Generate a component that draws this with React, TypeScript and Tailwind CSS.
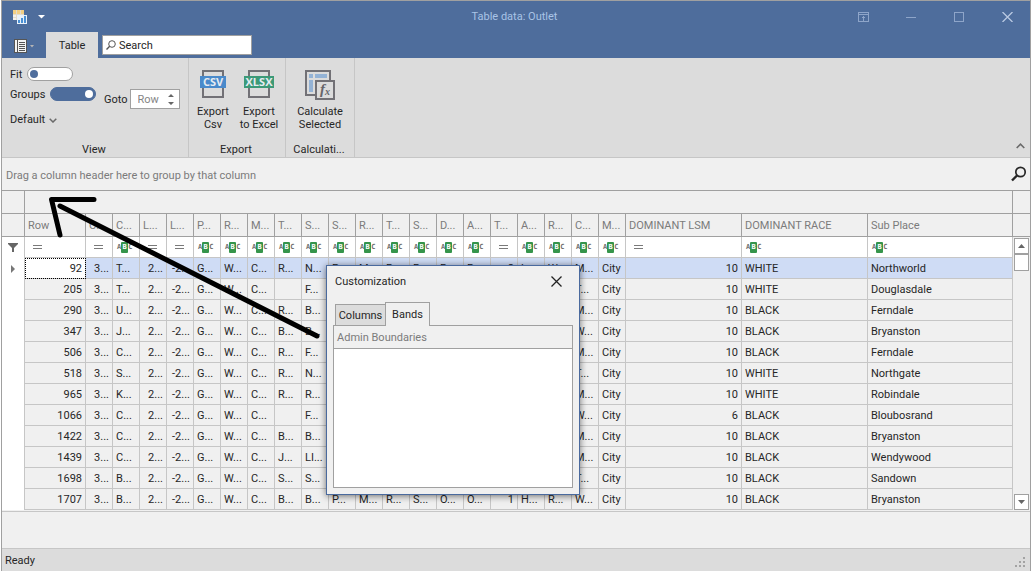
import React from 'react';

type FilterKind = 'eq' | 'abc';

interface Column {
  title: string;
  width?: string;
  filter: FilterKind;
  right?: boolean;
}

const narrow = (title: string, filter: FilterKind = 'abc', right = false): Column => ({
  title,
  width: 'w-[27px]',
  filter,
  right
});

const columns: Column[] = [
  { title: 'Row', width: 'w-[61px]', filter: 'eq', right: true },
  narrow('C...', 'eq', true),
  narrow('C...'),
  narrow('L...', 'eq', true),
  narrow('L...', 'eq', true),
  narrow('P...'),
  narrow('R...'),
  narrow('M...'),
  narrow('T...'),
  narrow('S...'),
  narrow('S...'),
  narrow('R...'),
  narrow('T...'),
  narrow('S...'),
  narrow('D...'),
  narrow('A...'),
  narrow('T...', 'eq', true),
  narrow('A...'),
  narrow('R...'),
  narrow('C...'),
  narrow('M...'),
  { title: 'DOMINANT LSM', width: 'w-[116px]', filter: 'eq', right: true },
  { title: 'DOMINANT RACE', width: 'w-[126px]', filter: 'abc' },
  { title: 'Sub Place', filter: 'abc' }
];

const rows = [
  '92|3...|T...|2...|-2...|G...|W...|C...|R...|N...|P...|M...|R...|R...|R...|R...|2|L...|W...|M...|City|10|WHITE|Northworld',
  '205|3...|T...|2...|-2...|G...|W...|C...||F...||||||||||T...|City|10|WHITE|Douglasdale',
  '290|3...|U...|2...|-2...|G...|W...|C...|R...|B...||||||||||M...|City|10|BLACK|Ferndale',
  '347|3...|J...|2...|-2...|G...|W...|C...|B...|B...||||||||||W...|City|10|BLACK|Bryanston',
  '506|3...|C...|2...|-2...|G...|W...|C...|R...|F...||||||||||M...|City|10|BLACK|Ferndale',
  '518|3...|S...|2...|-2...|G...|W...|C...|R...|N...||||||||||T...|City|10|WHITE|Northgate',
  '965|3...|K...|2...|-2...|G...|W...|C...|R...|R...||||||||||M...|City|10|WHITE|Robindale',
  '1066|3...|C...|2...|-2...|G...|W...|C...||F...||||||||||W...|City|6|BLACK|Bloubosrand',
  '1422|3...|C...|2...|-2...|G...|W...|C...|B...|B...||||||||||M...|City|10|BLACK|Bryanston',
  '1439|3...|C...|2...|-2...|G...|W...|C...|J...|LI...||||||||||M...|City|10|BLACK|Wendywood',
  '1698|3...|B...|2...|-2...|G...|W...|C...|S...|S...||||||||||T...|City|10|BLACK|Sandown',
  '1707|3...|B...|2...|-2...|G...|W...|C...|B...|B...|P...|M...|R...|S...|O...|O...|1|H...|R...|W...|City|10|BLACK|Bryanston'
].map((line) => line.split('|'));

const TitleBar = () => (
  <header className="flex h-[31px] items-center bg-[#4e6d9c] pl-[11px] text-[#a9c4e6]">
    <svg width="14" height="14" viewBox="0 0 14 14" shapeRendering="crispEdges">
      <rect width="11" height="10" fill="#f4f1ea" />
      <path d="M0 0h11v4H0z" fill="#f3cf83" />
      <path d="M0 4.500h11M0 7.500h5M3.500 0v10M7.500 0v4" stroke="#e3dccd" fill="none" />
      <rect x="4" y="5" width="10" height="9" fill="#e9f1fa" />
      <path d="M5 10h2v3H5zM8 8h2v5H8zM11 6h2v7h-2z" fill="#4a90d4" />
    </svg>
    <button type="button" aria-label="Customize toolbar" className="ml-[11px]">
      <svg width="7" height="4" viewBox="0 0 7 4"><path d="M0 0h7L3.500 3.500z" fill="#fff" /></svg>
    </button>
    <h1 className="flex-1 pl-[126px] text-center">Table data: Outlet</h1>
    <div className="flex items-center gap-[37px] pr-[17px]">
      <button type="button" aria-label="Ribbon display options">
        <svg width="11" height="10" viewBox="0 0 11 10" fill="none" stroke="#8ea5c9" shapeRendering="crispEdges">
          <path d="M.5.5h10v9H.5zM.5 2.500h10M5.500 4v5M4 5.500h3" />
        </svg>
      </button>
      <button type="button" aria-label="Minimize">
        <svg width="11" height="10" viewBox="0 0 11 10" stroke="#8ea5c9" shapeRendering="crispEdges"><path d="M0 5.500h10" /></svg>
      </button>
      <button type="button" aria-label="Maximize">
        <svg width="11" height="10" viewBox="0 0 11 10" fill="none" stroke="#8ea5c9" shapeRendering="crispEdges"><path d="M.5.5h9v9h-9z" /></svg>
      </button>
      <button type="button" aria-label="Close">
        <svg width="11" height="10" viewBox="0 0 11 10" stroke="#b9c9e2" strokeWidth="1.300"><path d="M.5 0l10 10M10.500 0l-10 10" /></svg>
      </button>
    </div>
  </header>
);

const TabStrip = () => (
  <div className="flex h-[26px] bg-[#4e6d9c]">
    <button type="button" aria-label="File menu" className="flex w-[44px] items-center gap-[3px] pl-[12px] pt-[2px]">
      <svg width="13" height="14" viewBox="0 0 13 14" shapeRendering="crispEdges">
        <path d="M0 0h13v14H0z" fill="#555" />
        <path d="M1 1h11v12H1z" fill="#f4f4f4" />
        <path d="M3.500 1v12" stroke="#555" />
        <path d="M5 3.500h6M5 5.500h6M5 7.500h6M5 9.500h6M5 11.500h6" stroke="#555" />
      </svg>
      <svg width="4" height="3" viewBox="0 0 4 3"><path d="M0 0h4L2 2.500z" fill="#b5b5b5" /></svg>
    </button>
    <button type="button" className="w-[52px] bg-[#dcdcdc] pt-[2px]">Table</button>
    <label className="ml-1 mt-[3px] flex h-[20px] w-[150px] items-center gap-[3px] border border-[#a0a0a0] bg-white pl-[3px]">
      <svg className="shrink-0" width="10" height="10" viewBox="0 0 10 10" fill="none" stroke="#555">
        <circle cx="6" cy="4" r="3.300" />
        <path d="M3.700 6.300L.5 9.500" strokeWidth="1.400" />
      </svg>
      <input aria-label="Search" placeholder="Search" className="w-full min-w-0 pt-px outline-none placeholder:text-[#262626]" />
    </label>
  </div>
);

const Toggle = ({ label, checked }: { label: string; checked?: boolean }) => (
  <label className="flex h-[20px] items-center gap-[5px]">
    <span className="pt-px">{label}</span>
    <input type="checkbox" defaultChecked={checked} className="peer sr-only" />
    <span className="flex h-[14px] w-[46px] items-center rounded-full border border-[#a0a0a0] bg-white px-[2px] before:size-[8px] before:rounded-full before:bg-[#4e6d9c] peer-checked:justify-end peer-checked:border-[#4e6d9c] peer-checked:bg-[#4e6d9c] peer-checked:before:bg-white" />
  </label>
);

const FileIcon = ({ text, color }: { text: string; color: string }) => (
  <svg width="30" height="28" viewBox="0 0 30 28">
    <path d="M5 1h20v26H5z" fill="none" stroke="#727176" strokeWidth="2" />
    <rect x={text === 'CSV' ? 2 : 0} y="6" width={text === 'CSV' ? 26 : 30} height="12" fill={color} />
    <text x="15" y="16" textAnchor="middle" fontSize="11" fontWeight="700" fontFamily="Open Sans, sans-serif" fill="#e6ecf2">
      {text}
    </text>
  </svg>
);

const CalcIcon = () => (
  <svg width="30" height="30" viewBox="0 0 30 30">
    <path d="M1 1h24v24H1z" fill="none" stroke="#727176" strokeWidth="2" />
    <path d="M4 4h4v4H4zM10 4h12v4H10zM4 10h4v12H4z" fill="#94b3d6" />
    <path d="M11 11h18v18H11z" fill="#dcdcdc" stroke="#727176" strokeWidth="2" />
    <text x="15" y="24" fontSize="15" fontStyle="italic" fontWeight="700" fontFamily="Liberation Serif, serif" fill="#66656a">f</text>
    <text x="20" y="25" fontSize="10" fontStyle="italic" fontWeight="700" fontFamily="Liberation Serif, serif" fill="#66656a">x</text>
  </svg>
);

const RibbonButton = ({ icon, lines }: { icon: React.ReactNode; lines: string[] }) => (
  <button type="button" className="flex min-w-[46px] flex-col items-center leading-[13px]">
    <span className="mb-[5px] flex h-[30px] items-start">{icon}</span>
    {lines.map((line) => (
      <span key={line}>{line}</span>
    ))}
  </button>
);

const RibbonGroup = ({ title, className, children }: { title: string; className: string; children: React.ReactNode }) => (
  <section className={`flex flex-col border-r border-[#c6c6c6] ${className}`}>
    <div className="flex flex-1 justify-center">{children}</div>
    <h2 className="pr-[2px] text-center leading-[14px]">{title}</h2>
  </section>
);

const Ribbon = () => (
  <div className="flex h-[100px] border-b border-[#c6c6c6] bg-[#dcdcdc]">
    <RibbonGroup title="View" className="w-[187px]">
      <div className="flex flex-1 items-start pl-2 pt-[6px]">
        <div className="w-[88px]">
          <Toggle label="Fit" />
          <Toggle label="Groups" checked />
          <button type="button" className="mt-[8px] flex h-4 items-center gap-1">
            Default
            <svg width="8" height="5" viewBox="0 0 8 5" fill="none" stroke="#6a6a6a" strokeWidth="1.500"><path d="M.7.7L4 4 7.300.7" /></svg>
          </button>
        </div>
        <label className="ml-[6px] mt-[25px] flex h-[20px] items-center gap-[2px]">
          <span className="pt-[2px]">Goto</span>
          <span className="flex h-[20px] w-[50px] items-center border border-[#a0a0a0] bg-white pl-[7px]">
            <input placeholder="Row" className="w-[30px] pt-px outline-none placeholder:text-[#858585]" />
            <svg width="6" height="11" viewBox="0 0 6 11" fill="#666"><path d="M3 0l3 3H0zM3 11l3-3H0z" /></svg>
          </span>
        </label>
      </div>
    </RibbonGroup>
    <RibbonGroup title="Export" className="w-[97px]">
      <div className="flex pr-[2px] pt-[12px]">
        <RibbonButton icon={<FileIcon text="CSV" color="#4a8acb" />} lines={['Export', 'Csv']} />
        <RibbonButton icon={<FileIcon text="XLSX" color="#3c9a78" />} lines={['Export', 'to Excel']} />
      </div>
    </RibbonGroup>
    <RibbonGroup title="Calculati..." className="w-[69px]">
      <div className="pt-[12px]">
        <RibbonButton icon={<CalcIcon />} lines={['Calculate', 'Selected']} />
      </div>
    </RibbonGroup>
    <div className="flex flex-1 items-end justify-end pb-2 pr-[5px]">
      <button type="button" aria-label="Collapse ribbon">
        <svg width="9" height="6" viewBox="0 0 9 6" fill="none" stroke="#6a6a6a" strokeWidth="1.600"><path d="M.7 5L4.500 1.200 8.300 5" /></svg>
      </button>
    </div>
  </div>
);

const FilterIcon = ({ kind }: { kind: FilterKind }) =>
  kind === 'eq' ? (
    <span className="ml-[8px] block h-[4px] w-[9px] border-y border-[#7a7a7a]" />
  ) : (
    <span className="ml-[4px] flex items-center font-['DejaVu_Sans_Mono',monospace] text-[7px] font-bold leading-[11px] text-[#6e6e6e]">
      A<b className="w-[7px] rounded-[1px] bg-[#35944b] text-center text-white">B</b>C
    </span>
  );

const DataTable = () => (
  <table className="w-full flex-1 table-fixed border-separate border-spacing-0">
    <colgroup>
      <col className="w-[23px]" />
      {columns.map((column, i) => (
        <col key={i} className={column.width} />
      ))}
    </colgroup>
    <thead className="text-left text-[#7b7b7b]">
      <tr className="h-[23px]">
        <td className="border-b border-r border-[#a0a0a0]" />
        <td colSpan={columns.length} className="border-b border-r border-[#a0a0a0]" />
      </tr>
      <tr className="h-[23px]">
        <td className="border-b border-r border-[#a0a0a0]" />
        {columns.map((column, i) => (
          <th key={i} scope="col" className="overflow-hidden whitespace-nowrap border-b border-r border-[#a0a0a0] pl-[3px] pt-[2px] font-normal">
            {column.title}
          </th>
        ))}
      </tr>
    </thead>
    <tbody>
      <tr className="h-[21px] bg-white">
        <td className="border-r border-[#c6c6c6]">
          <svg className="mx-auto" width="10" height="9" viewBox="0 0 10 9"><path d="M0 0h10v1L6 5v4H4V5L0 1z" fill="#666" /></svg>
        </td>
        {columns.map((column, i) => (
          <td key={i} className="border-b border-r border-[#c6c6c6]">
            <FilterIcon kind={column.filter} />
          </td>
        ))}
      </tr>
      {rows.map((row, r) => (
        <tr key={row[0]} className={`h-[21px] ${r === 0 ? 'bg-[#cfdcf5]' : ''}`}>
          <td className="border-r border-[#c6c6c6] bg-white">
            {r === 0 && (
              <svg className="ml-[9px]" width="4" height="8" viewBox="0 0 4 8"><path d="M0 0l4 4-4 4z" fill="#777" /></svg>
            )}
          </td>
          {row.map((value, i) => (
            <td
              key={i}
              className={`overflow-hidden whitespace-nowrap border-b border-r border-[#c6c6c6] px-[3px] pt-[2px] ${columns[i].right ? 'text-right' : ''} ${
                r === 0 && i === 0 ? 'bg-white outline-1 -outline-offset-1 outline-dotted outline-black' : ''
              }`}
            >
              {value}
            </td>
          ))}
        </tr>
      ))}
    </tbody>
  </table>
);

const ScrollBar = () => (
  <div className="flex w-[17px] flex-col">
    <div className="h-[23px] border-b border-[#a0a0a0]" />
    <div className="h-[23px] border-b border-[#a0a0a0]" />
    <div className="flex flex-1 flex-col px-px pt-px">
      <button type="button" aria-label="Scroll up" className="flex h-[16px] items-center justify-center border border-[#a0a0a0] bg-white">
        <svg width="7" height="4" viewBox="0 0 7 4"><path d="M0 4h7L3.500 0z" fill="#666" /></svg>
      </button>
      <div className="h-[17px] border border-[#a0a0a0] bg-white" />
      <button type="button" aria-label="Scroll down" className="mt-auto flex h-[16px] items-center justify-center border border-[#a0a0a0] bg-white">
        <svg width="7" height="4" viewBox="0 0 7 4"><path d="M0 0h7L3.500 4z" fill="#666" /></svg>
      </button>
    </div>
  </div>
);

const CustomizationDialog = () => (
  <div
    role="dialog"
    aria-label="Customization"
    className="absolute left-[326px] top-[265px] flex h-[230px] w-[254px] flex-col border border-[#4a6a9e] bg-[#f0f0f0] px-[6px] pb-[6px] shadow-[0_1px_7px_rgba(0,0,0,0.55)]"
  >
    <div className="flex h-[36px] items-center justify-between pb-[5px] pl-[2px] pr-[11px]">
      <h2>Customization</h2>
      <button type="button" aria-label="Close dialog">
        <svg width="11" height="11" viewBox="0 0 11 11" stroke="#222" strokeWidth="1.300"><path d="M.5.5l10 10M10.500.5l-10 10" /></svg>
      </button>
    </div>
    <div className="flex items-end pl-[2px]">
      <button type="button" className="h-[21px] w-[50px] border border-b-0 border-r-0 border-[#a0a0a0] bg-[#dcdcdc] pt-px">Columns</button>
      <button type="button" className="relative -mb-px h-[24px] w-[45px] border border-b-0 border-[#a0a0a0] bg-[#f0f0f0]">Bands</button>
    </div>
    <div className="flex flex-1 flex-col border border-[#a0a0a0] bg-white">
      <div className="h-[23px] border-b border-[#a0a0a0] bg-[#f0f0f0] pl-[3px] pt-px leading-[22px] text-[#7b7b7b]">Admin Boundaries</div>
    </div>
  </div>
);

const App = () => (
  <div className="min-h-screen bg-white px-px font-['Roboto',sans-serif] text-[11px] leading-4 text-[#262626]">
    <div className="flex min-h-screen flex-col border border-b-0 border-[#a0a0a0] bg-[#f0f0f0]">
      <TitleBar />
      <TabStrip />
      <Ribbon />
      <div className="flex h-[32px] items-center justify-between pl-1 pr-[3px] text-[#7b7b7b]">
        <span className="pt-[3px]">Drag a column header here to group by that column</span>
        <button type="button" aria-label="Find">
          <svg width="16" height="16" viewBox="0 0 16 16" fill="none" stroke="#262626">
            <circle cx="9.500" cy="6" r="4.700" strokeWidth="1.700" />
            <path d="M6 9.500L1 14.500" strokeWidth="2.400" />
          </svg>
        </button>
      </div>
      <div className="flex border-b border-t border-b-[#c6c6c6] border-t-[#a0a0a0] pb-px">
        <DataTable />
        <ScrollBar />
      </div>
      <div className="flex-1" />
      <footer className="flex h-[23px] items-center justify-between border-t border-[#c6c6c6] bg-[#dcdcdc] pl-[3px] pr-[4px]">
        <span className="pt-[2px]">Ready</span>
        <svg className="mt-1" width="11" height="11" viewBox="0 0 11 11" fill="#a3a3a3">
          <path d="M8 0h2v2H8zM4 4h2v2H4zM8 4h2v2H8zM0 8h2v2H0zM4 8h2v2H4zM8 8h2v2H8z" />
        </svg>
      </footer>
    </div>
    <CustomizationDialog />
    {/* hand-drawn pointer from the dialog to the band header */}
    <svg className="pointer-events-none absolute left-[45px] top-[190px]" width="280" height="155" viewBox="45 190 280 155" fill="none" stroke="#000" strokeWidth="5" strokeLinecap="round">
      <path d="M60 206L317 336" />
      <path d="M94 199.500H51.500L60 235" strokeLinejoin="round" />
    </svg>
  </div>
);

export default App;
